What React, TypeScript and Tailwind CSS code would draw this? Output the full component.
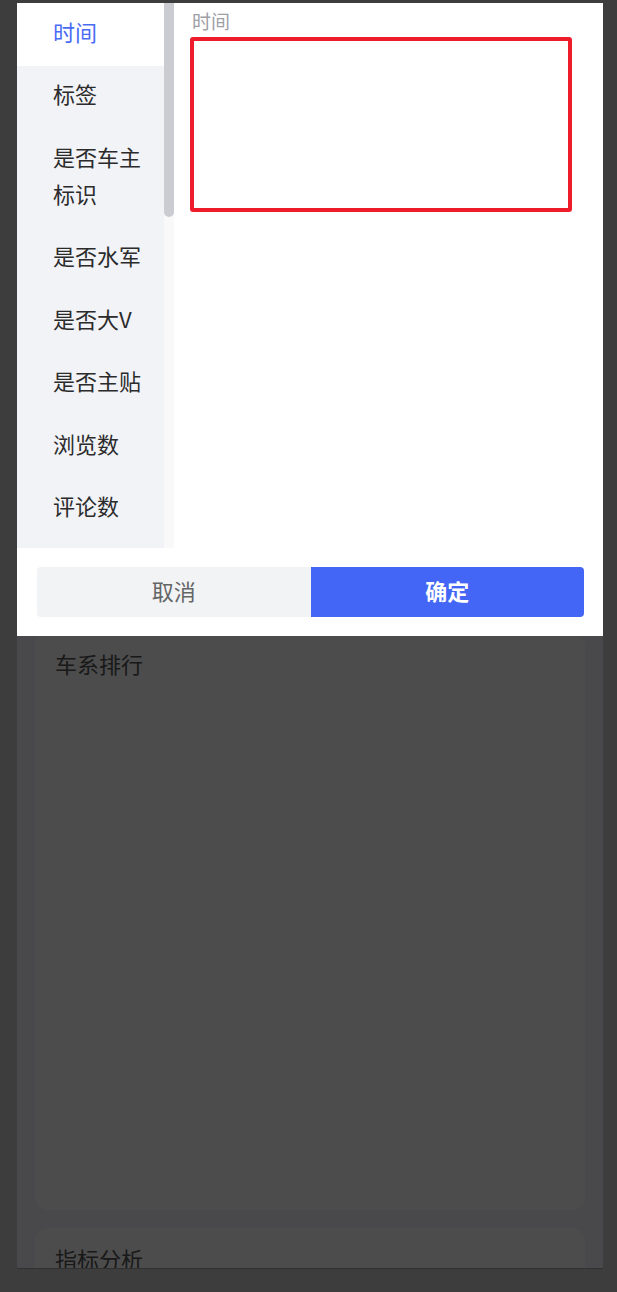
import React from "react";

const items: { label: string; lines?: string[] }[] = [
  { label: "时间" },
  { label: "标签" },
  { label: "是否车主标识", lines: ["是否车主", "标识"] },
  { label: "是否水军" },
  { label: "是否大V" },
  { label: "是否主贴" },
  { label: "浏览数" },
  { label: "评论数" },
  { label: "点赞数" },
  { label: "转发数" },
];

const font = { fontFamily: '"Noto Sans CJK SC", "Noto Sans", sans-serif' };

export default function App() {
  return (
    <div className="w-[617px] h-[1292px] bg-[#3d3d3d] pt-[3px] pl-[17px]" style={font}>
      <div className="relative w-[586px] h-[1266px] overflow-hidden bg-[#f4f6fb] border-b border-[#303030]">
        {/* underlying page */}
        <div className="flex flex-col gap-[18px] px-[18px] pt-[18px]">
          <div className="h-[594px] rounded-[14px] bg-white px-[20px] pt-[14px]">
            <div className="text-[22px] leading-[32px] text-[#555]">数据概览</div>
          </div>
          <div className="h-[577px] rounded-[14px] bg-white px-[20px] pt-[14px]">
            <div className="text-[22px] leading-[32px] text-[#555]">车系排行</div>
          </div>
          <div className="h-[400px] rounded-[14px] bg-white px-[20px] pt-[14px]">
            <div className="text-[22px] leading-[32px] text-[#555]">指标分析</div>
          </div>
        </div>

        {/* overlay */}
        <div className="absolute inset-0 z-10 bg-black/70" />

        {/* popup */}
        <div className="absolute left-0 right-0 top-0 z-20 bg-white">
          <div className="flex h-[545px]">
            <div className="w-[147px] h-full overflow-hidden bg-[#f2f3f7]">
              {items.map((it, i) => (
                <div
                  key={it.label}
                  className={
                    i === 0
                      ? "bg-white pl-[36px] pr-[8px] pt-[9.75px] pb-[15.75px] text-[22px] leading-[37px] text-[#4a6bf6]"
                      : "pl-[36px] pr-[8px] pt-[9.75px] pb-[15.75px] text-[22px] leading-[37px] text-[#2b2b2c]"
                  }
                >
                  {it.lines ? it.lines.map((l) => <div key={l}>{l}</div>) : it.label}
                </div>
              ))}
            </div>
            <div className="w-[10px] h-full bg-[#f9f9f9]">
              <div className="h-[214px] w-full rounded-b-[5px] bg-[#cbccd1]" />
            </div>
            <div className="flex-1 pl-[16px] pt-[5px]">
              <div className="ml-[2px] text-[19px] leading-[26px] text-[#9ea0a6]">时间</div>
              <div className="mt-[3px] h-[175px] w-[382px] rounded-[3px] border-[4px] border-[#ee1c2a]" />
            </div>
          </div>
          <div className="flex px-[20px] pr-[19px] py-[19px]">
            <button className="flex-1 h-[50px] rounded-l-[4px] bg-[#f2f3f5] pb-[4px] text-[22px] text-[#646566]">
              取消
            </button>
            <button className="flex-1 h-[50px] rounded-r-[4px] bg-[#4466f6] pb-[4px] text-[22px] font-bold text-white">
              确定
            </button>
          </div>
        </div>
      </div>
    </div>
  );
}
